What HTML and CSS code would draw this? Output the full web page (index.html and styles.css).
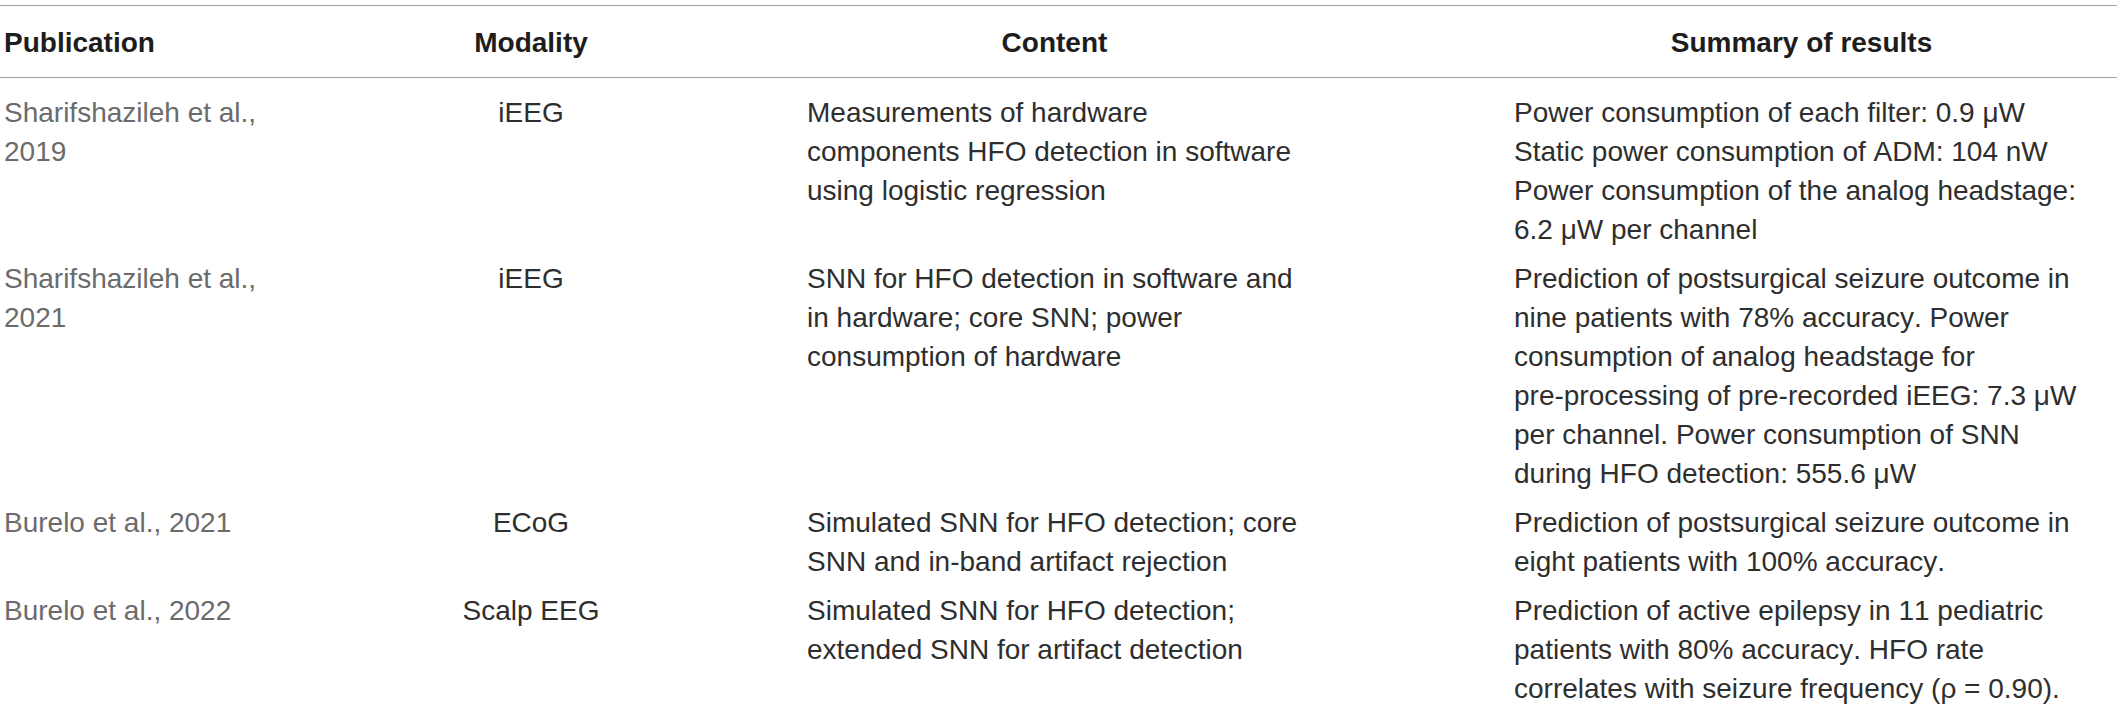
FILE: index.html
```html
<!DOCTYPE html>
<html lang="en">
<head>
<meta charset="utf-8">
<title>Table</title>
<link rel="stylesheet" href="styles.css">
</head>
<body>
<div class="page">
<table class="results">
  <colgroup>
    <col class="w-pub">
    <col class="w-mod">
    <col class="w-con">
    <col class="w-sum">
  </colgroup>
  <thead>
    <tr>
      <th class="c-pub">Publication</th>
      <th class="c-mod">Modality</th>
      <th class="c-con">Content</th>
      <th class="c-sum">Summary of results</th>
    </tr>
  </thead>
  <tbody>
    <tr>
      <td class="c-pub">Sharifshazileh et al., 2019</td>
      <td class="c-mod">iEEG</td>
      <td class="c-con">Measurements of hardware components HFO detection in software using logistic regression</td>
      <td class="c-sum">Power consumption of each filter: 0.9 μW<br>Static power consumption of ADM: 104 nW<br>Power consumption of the analog headstage: 6.2 μW per channel</td>
    </tr>
    <tr>
      <td class="c-pub">Sharifshazileh et al., 2021</td>
      <td class="c-mod">iEEG</td>
      <td class="c-con">SNN for HFO detection in software and in hardware; core SNN; power consumption of hardware</td>
      <td class="c-sum">Prediction of postsurgical seizure outcome in nine patients with 78% accuracy. Power consumption of analog headstage for pre-&#8288;processing of pre-&#8288;recorded iEEG: 7.3 μW per channel. Power consumption of SNN during HFO detection: 555.6 μW</td>
    </tr>
    <tr>
      <td class="c-pub">Burelo et al., 2021</td>
      <td class="c-mod">ECoG</td>
      <td class="c-con">Simulated SNN for HFO detection; core SNN and in-&#8288;band artifact rejection</td>
      <td class="c-sum">Prediction of postsurgical seizure outcome in eight patients with 100% accuracy.</td>
    </tr>
    <tr>
      <td class="c-pub">Burelo et al., 2022</td>
      <td class="c-mod">Scalp EEG</td>
      <td class="c-con">Simulated SNN for HFO detection; extended SNN for artifact detection</td>
      <td class="c-sum">Prediction of active epilepsy in 11 pediatric patients with 80% accuracy. HFO rate correlates with seizure frequency (ρ = 0.90).</td>
    </tr>
  </tbody>
</table>
</div>
</body>
</html>
```

FILE: styles.css
```css
html, body {
  margin: 0;
  padding: 0;
  background: #ffffff;
}

.page {
  padding-top: 5px;
}

.results {
  width: 2117px;
  table-layout: fixed;
  border-collapse: collapse;
  border-top: 1px solid #a0a0a0;
  font-family: "Liberation Sans", Arial, Helvetica, sans-serif;
  font-size: 28px;
  line-height: 39px;
  font-kerning: none;
  color: #2e2e2e;
}

.w-pub { width: 320px; }
.w-mod { width: 422px; }
.w-con { width: 708px; }
.w-sum { width: 667px; }

.results thead th {
  font-weight: bold;
  color: #1d1d1d;
  padding-top: 17px;
  padding-bottom: 15px;
  border-bottom: 1px solid #a0a0a0;
}

.results td {
  vertical-align: top;
  padding-top: 5px;
  padding-bottom: 5px;
}

.results tbody tr:first-child td {
  padding-top: 15px;
}

.c-pub {
  text-align: left;
  padding-left: 4px;
  padding-right: 30px;
}

.results td.c-pub {
  color: #6b6b6b;
}

.c-mod {
  text-align: center;
  padding-left: 0;
  padding-right: 0;
}

.c-con {
  text-align: left;
  padding-left: 65px;
  padding-right: 148px;
}

.results th.c-con,
.results th.c-sum {
  text-align: center;
}

.c-sum {
  text-align: left;
  padding-left: 64px;
  padding-right: 28px;
}
```
